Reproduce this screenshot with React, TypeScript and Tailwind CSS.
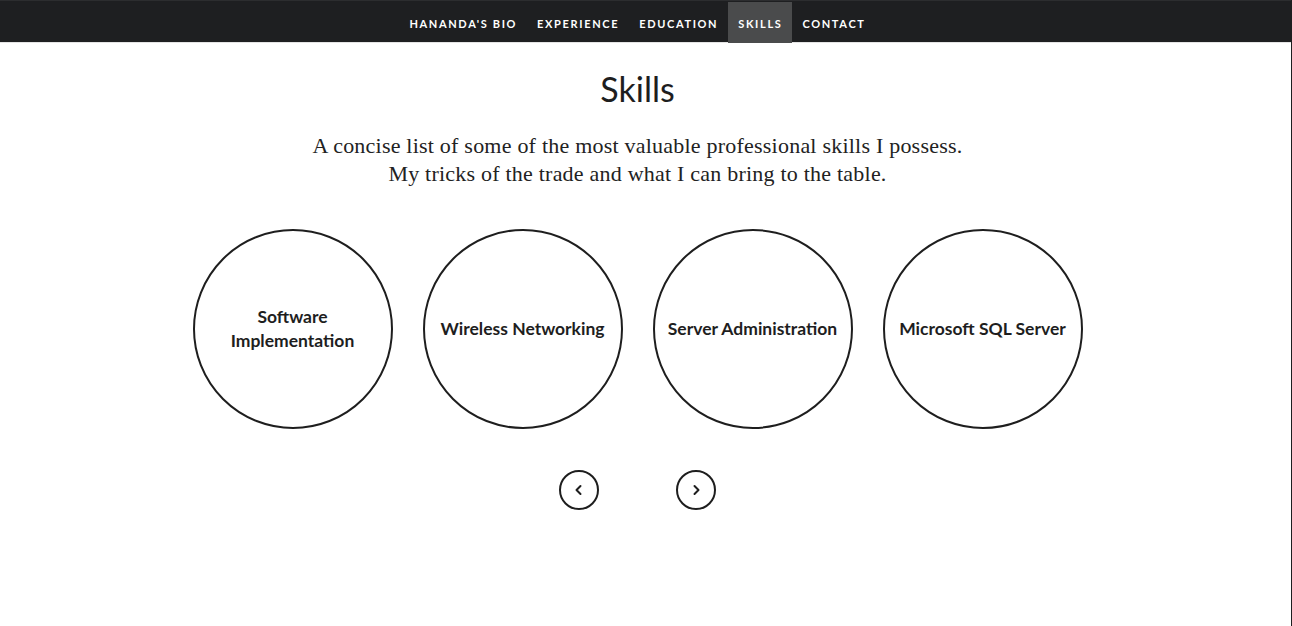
const NAV = ["Hananda's Bio", 'Experience', 'Education', 'Skills', 'Contact'];
const SKILLS = ['Software Implementation', 'Wireless Networking', 'Server Administration', 'Microsoft SQL Server'];

function Chevron({ dir }: { dir: 'left' | 'right' }) {
  return (
    <svg width="10" height="12" viewBox="0 0 10 12" fill="none" aria-hidden="true">
      <path
        d={dir === 'left' ? 'M6.5 2L2.5 6L6.5 10' : 'M3.5 2L7.5 6L3.5 10'}
        stroke="#1e1e1e"
        strokeWidth="2"
        strokeLinecap="round"
        strokeLinejoin="round"
      />
    </svg>
  );
}

export default function App() {
  return (
    <div className="h-[626px] bg-white border-r border-[#1e1f21] overflow-hidden">
      <nav className="h-[43px] bg-[#1e1f21] border-t border-[#2c2d2f] border-b border-b-[#e4e4e4] flex justify-center pr-[16px]">
        <ul className="flex h-[41px] mt-px">
          {NAV.map((item) => (
            <li
              key={item}
              className={`px-[10px] pt-[3px] flex items-center uppercase text-white text-[11px] font-bold tracking-[0.15em] ${item === 'Skills' ? 'bg-[#4a4b4c]' : ''}`}
              style={{ fontFamily: 'Lato, sans-serif' }}
            >
              {item}
            </li>
          ))}
        </ul>
      </nav>

      <main className="flex flex-col items-center text-[#1e1e1e] pr-[16px]">
        <h1 className="mt-[23px] text-[34px] leading-[46px]" style={{ fontFamily: 'Lato, sans-serif' }}>
          Skills
        </h1>
        <p
          className="mt-[20px] text-center text-[22px] leading-[28px] tracking-[0.01em] text-[#222]"
          style={{ fontFamily: '"Liberation Serif", serif' }}
        >
          A concise list of some of the most valuable professional skills I possess.
          <br />
          My tricks of the trade and what I can bring to the table.
        </p>

        <div className="mt-[41px] flex gap-[30px]">
          {SKILLS.map((s) => (
            <div
              key={s}
              className="w-[200px] h-[200px] rounded-full border-2 border-[#1e1e1e] flex items-center justify-center text-center px-[4px]"
            >
              <span className="text-[17.5px] font-bold leading-[24px] whitespace-nowrap" style={{ fontFamily: 'Lato, sans-serif' }}>
                {s === 'Software Implementation' ? (
                  <>
                    Software
                    <br />
                    Implementation
                  </>
                ) : (
                  s
                )}
              </span>
            </div>
          ))}
        </div>

        <div className="mt-[41px] flex gap-[77px]">
          <button className="w-[40px] h-[40px] rounded-full border-2 border-[#1e1e1e] flex items-center justify-center">
            <Chevron dir="left" />
          </button>
          <button className="w-[40px] h-[40px] rounded-full border-2 border-[#1e1e1e] flex items-center justify-center">
            <Chevron dir="right" />
          </button>
        </div>
      </main>
    </div>
  );
}
